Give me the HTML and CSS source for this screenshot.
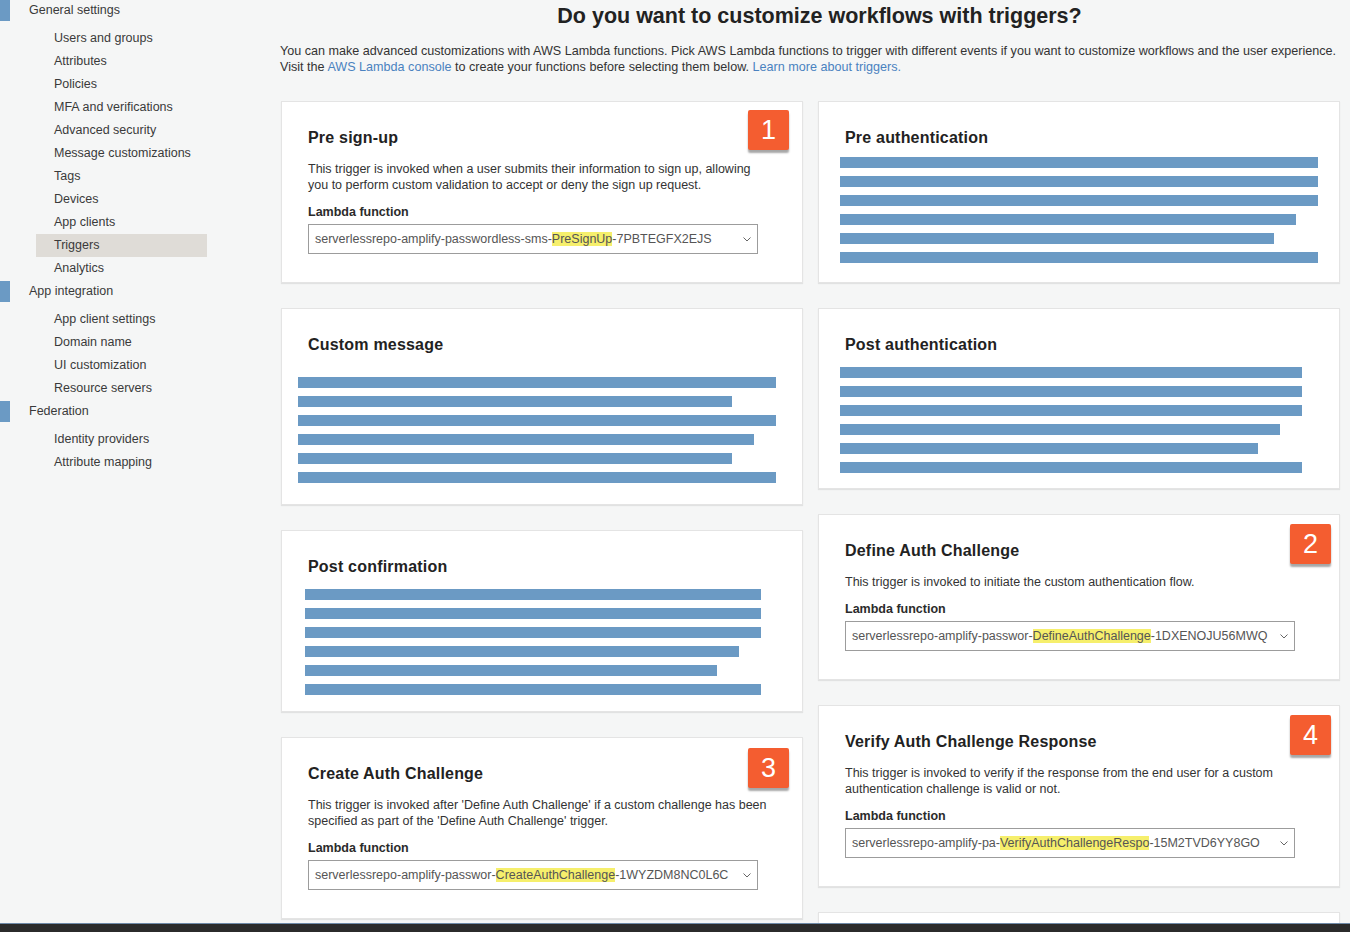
FILE: index.html
```html
<!DOCTYPE html>
<html lang="en">
<head>
<meta charset="utf-8">
<title>Triggers</title>
<link rel="stylesheet" href="styles.css">
</head>
<body>
<div class="page">
  <nav class="sidebar">
    <div class="nav-head nav-first">General settings</div>
    <div class="nav-item">Users and groups</div>
    <div class="nav-item">Attributes</div>
    <div class="nav-item">Policies</div>
    <div class="nav-item">MFA and verifications</div>
    <div class="nav-item">Advanced security</div>
    <div class="nav-item">Message customizations</div>
    <div class="nav-item">Tags</div>
    <div class="nav-item">Devices</div>
    <div class="nav-item">App clients</div>
    <div class="nav-item active">Triggers</div>
    <div class="nav-item">Analytics</div>
    <div class="nav-head">App integration</div>
    <div class="nav-item">App client settings</div>
    <div class="nav-item">Domain name</div>
    <div class="nav-item">UI customization</div>
    <div class="nav-item">Resource servers</div>
    <div class="nav-head">Federation</div>
    <div class="nav-item">Identity providers</div>
    <div class="nav-item">Attribute mapping</div>
  </nav>

  <main class="main">
    <h1 class="title">Do you want to customize workflows with triggers?</h1>
    <p class="intro">You can make advanced customizations with AWS Lambda functions. Pick AWS Lambda functions to trigger with different events if you want to customize workflows and the user experience.<br>Visit the <a class="link">AWS Lambda console</a> to create your functions before selecting them below. <a class="link">Learn more about triggers.</a></p>

    <div class="grid">
      <div class="col">
        <section class="card">
          <div class="badge badge-l">1</div>
          <h2 class="card-title">Pre sign-up</h2>
          <p class="card-desc">This trigger is invoked when a user submits their information to sign up, allowing<br>you to perform custom validation to accept or deny the sign up request.</p>
          <div class="label">Lambda function</div>
          <div class="select"><span class="select-text">serverlessrepo-amplify-passwordless-sms-<mark class="hl">PreSignUp</mark>-7PBTEGFX2EJS</span><svg class="chev" width="8" height="5" viewBox="0 0 8 5"><path d="M0.5 0.5 L4 4 L7.5 0.5" fill="none" stroke="#666" stroke-width="1"/></svg></div>
        </section>

        <section class="card card-bars-custom">
          <h2 class="card-title">Custom message</h2>
          <div class="bars bars-custom">
            <div class="bar" style="width:478px"></div>
            <div class="bar" style="width:434px"></div>
            <div class="bar" style="width:478px"></div>
            <div class="bar" style="width:456px"></div>
            <div class="bar" style="width:434px"></div>
            <div class="bar" style="width:478px"></div>
          </div>
        </section>

        <section class="card card-bars-postconf">
          <h2 class="card-title">Post confirmation</h2>
          <div class="bars bars-postconf">
            <div class="bar" style="width:456px"></div>
            <div class="bar" style="width:456px"></div>
            <div class="bar" style="width:456px"></div>
            <div class="bar" style="width:434px"></div>
            <div class="bar" style="width:412px"></div>
            <div class="bar" style="width:456px"></div>
          </div>
        </section>

        <section class="card">
          <div class="badge badge-l badge-low">3</div>
          <h2 class="card-title">Create Auth Challenge</h2>
          <p class="card-desc">This trigger is invoked after 'Define Auth Challenge' if a custom challenge has been<br>specified as part of the 'Define Auth Challenge' trigger.</p>
          <div class="label">Lambda function</div>
          <div class="select"><span class="select-text">serverlessrepo-amplify-passwor-<mark class="hl">CreateAuthChallenge</mark>-1WYZDM8NC0L6C</span><svg class="chev" width="8" height="5" viewBox="0 0 8 5"><path d="M0.5 0.5 L4 4 L7.5 0.5" fill="none" stroke="#666" stroke-width="1"/></svg></div>
        </section>
      </div>

      <div class="col">
        <section class="card card-bars-preauth">
          <h2 class="card-title">Pre authentication</h2>
          <div class="bars bars-preauth">
            <div class="bar" style="width:478px"></div>
            <div class="bar" style="width:478px"></div>
            <div class="bar" style="width:478px"></div>
            <div class="bar" style="width:456px"></div>
            <div class="bar" style="width:434px"></div>
            <div class="bar" style="width:478px"></div>
          </div>
        </section>

        <section class="card card-bars-postauth">
          <h2 class="card-title">Post authentication</h2>
          <div class="bars bars-postauth">
            <div class="bar" style="width:462px"></div>
            <div class="bar" style="width:462px"></div>
            <div class="bar" style="width:462px"></div>
            <div class="bar" style="width:440px"></div>
            <div class="bar" style="width:418px"></div>
            <div class="bar" style="width:462px"></div>
          </div>
        </section>

        <section class="card">
          <div class="badge badge-r">2</div>
          <h2 class="card-title">Define Auth Challenge</h2>
          <p class="card-desc">This trigger is invoked to initiate the custom authentication flow.</p>
          <div class="label">Lambda function</div>
          <div class="select"><span class="select-text">serverlessrepo-amplify-passwor-<mark class="hl">DefineAuthChallenge</mark>-1DXENOJU56MWQ</span><svg class="chev" width="8" height="5" viewBox="0 0 8 5"><path d="M0.5 0.5 L4 4 L7.5 0.5" fill="none" stroke="#666" stroke-width="1"/></svg></div>
        </section>

        <section class="card">
          <div class="badge badge-r">4</div>
          <h2 class="card-title">Verify Auth Challenge Response</h2>
          <p class="card-desc">This trigger is invoked to verify if the response from the end user for a custom<br>authentication challenge is valid or not.</p>
          <div class="label">Lambda function</div>
          <div class="select"><span class="select-text">serverlessrepo-amplify-pa-<mark class="hl">VerifyAuthChallengeRespo</mark>-15M2TVD6YY8GO</span><svg class="chev" width="8" height="5" viewBox="0 0 8 5"><path d="M0.5 0.5 L4 4 L7.5 0.5" fill="none" stroke="#666" stroke-width="1"/></svg></div>
        </section>

        <section class="card card-empty"></section>
      </div>
    </div>
  </main>
</div>
<div class="footer-bar"></div>
</body>
</html>
```

FILE: styles.css
```css
html, body {
  height: 100%;
  overflow: hidden;
}
body {
  margin: 0;
  background: #f5f6f6;
  font-family: "Liberation Sans", Arial, sans-serif;
  color: #333;
  font-size: 12.5px;
}
.page {
  display: flex;
  align-items: flex-start;
}
.sidebar {
  width: 280px;
  flex: 0 0 280px;
  display: flex;
  flex-direction: column;
  align-items: flex-start;
}
.nav-head {
  border-left: 10px solid #6b9ac4;
  padding-left: 19px;
  line-height: 21px;
  height: 21px;
  margin-top: 1px;
  margin-bottom: 6px;
  color: #3a3a3a;
  font-size: 12.5px;
}
.nav-first {
  margin-top: 0;
}
.nav-item {
  margin-left: 36px;
  padding-left: 18px;
  width: 171px;
  box-sizing: border-box;
  line-height: 23px;
  height: 23px;
  color: #3a3a3a;
}
.nav-item.active {
  background: #dfdcd7;
}
.main {
  flex: 1;
  min-width: 0;
}
.title {
  margin: 4px 0 0;
  padding-left: 9px;
  text-align: center;
  font-size: 21.5px;
  line-height: 24px;
  font-weight: bold;
  color: #222;
}
.intro {
  margin: 15px 0 0;
  line-height: 16px;
  white-space: nowrap;
  color: #333;
  font-size: 12.6px;
}
.link {
  color: #4a82c0;
  text-decoration: none;
}
.grid {
  margin-top: 26px;
  margin-left: 1px;
  display: grid;
  grid-template-columns: 522px 522px;
  column-gap: 15px;
  align-items: start;
}
.col {
  display: flex;
  flex-direction: column;
  gap: 25px;
}
.card {
  position: relative;
  background: #fff;
  border: 1px solid #e4e4e4;
  box-shadow: 0 1px 1px rgba(0, 0, 0, 0.08);
  padding: 23px 26px 28px;
}
.card-title {
  margin: 0;
  padding-top: 1px;
  font-size: 16px;
  line-height: 24px;
  font-weight: bold;
  color: #222;
  letter-spacing: 0.2px;
}
.card-desc {
  margin: 11px 0 0;
  line-height: 16px;
  color: #333;
}
.label {
  margin-top: 11px;
  line-height: 16px;
  font-weight: bold;
  color: #2b2b2b;
}
.select {
  margin-top: 4px;
  width: 450px;
  height: 30px;
  box-sizing: border-box;
  border: 1px solid #9c9c9c;
  display: flex;
  align-items: center;
  justify-content: space-between;
  padding: 0 6px 0 6px;
  background: #fff;
}
.select-text {
  color: #555;
  white-space: nowrap;
}
.hl {
  background: #f6ef6c;
  color: #555;
}
.chev {
  flex: 0 0 auto;
}
.bars {
  display: flex;
  flex-direction: column;
  gap: 8px;
}
.bar {
  height: 11px;
  background: #6b9ac4;
}
.card-bars-custom { padding-bottom: 21px; }
.bars-custom { margin-top: 20px; margin-left: -10px; }
.card-bars-preauth { padding-bottom: 19px; }
.bars-preauth { margin-top: 7px; margin-left: -5px; }
.card-bars-postauth { padding-bottom: 15px; }
.bars-postauth { margin-top: 10px; margin-left: -5px; }
.card-bars-postconf { padding-bottom: 16px; }
.bars-postconf { margin-top: 10px; margin-left: -3px; }
.card-empty {
  height: 200px;
  padding: 0;
}
.badge {
  position: absolute;
  top: 8px;
  width: 41px;
  height: 40px;
  background: #f45d30;
  color: #fff;
  font-size: 27px;
  line-height: 40px;
  text-align: center;
  border-radius: 2px;
  box-shadow: 0 3px 2px rgba(0, 0, 0, 0.35);
}
.badge-l { right: 13px; }
.badge-r { right: 8px; top: 9px; }
.badge-low { top: 10px; }
.footer-bar {
  position: fixed;
  left: 0;
  right: 0;
  bottom: 0;
  height: 8px;
  background: #2b2b2b;
  border-top: 1px solid #6f8aa8;
}
```
